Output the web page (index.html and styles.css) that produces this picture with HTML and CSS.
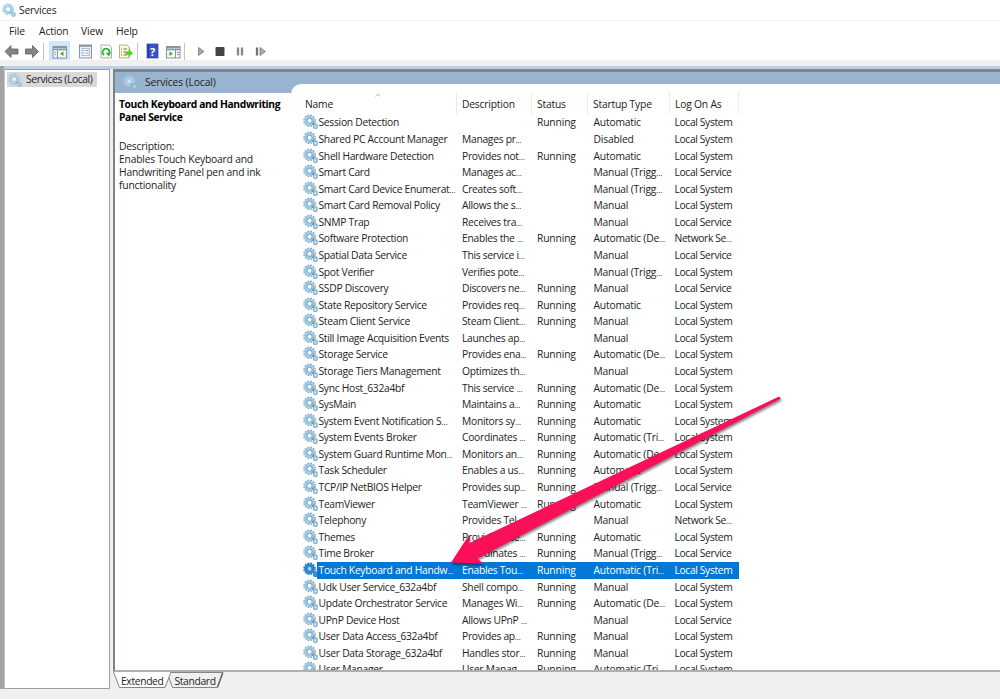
FILE: index.html
```html
<!DOCTYPE html>
<html lang="en">
<head>
  <meta charset="UTF-8" />
  <title>Services</title>
  <link rel="stylesheet" href="styles.css">
</head>
<body>
  <svg width="0" height="0" class="defs">
    <symbol id="gear" viewBox="0 0 16 16">
      <circle cx="7" cy="7.200" r="5.900" fill="none" stroke="#7fa9c4" stroke-width="1.600" stroke-dasharray="1.900 1.190"/>
      <circle cx="7" cy="7.200" r="4.200" fill="#f4fafd" stroke="#9fcae6" stroke-width="2.900"/>
      <circle cx="7" cy="7.200" r="2.700" fill="#fff" stroke="#5f8fb0" stroke-width=".9"/>
      <path d="M9.500 11.500 12.200 8.500" stroke="#5f90b2" stroke-width="1.200"/>
      <rect x="11.200" y="10.500" width="4" height="5" rx="1" fill="#a4cce4" stroke="#6b9cba" stroke-width=".8"/>
      <circle cx="13.200" cy="13" r=".8" fill="#eef8fc"/>
    </symbol>
    <symbol id="gear-light" viewBox="0 0 16 16">
      <circle cx="7" cy="7" r="6" fill="none" stroke="#a3c3d8" stroke-width="1.400" stroke-dasharray="1.900 1.240"/>
      <circle cx="7" cy="7" r="4.300" fill="none" stroke="#a9d3eb" stroke-width="2.600"/>
      <circle cx="7" cy="7" r="2.900" fill="#fff" fill-opacity=".6" stroke="#7dabc9" stroke-width=".7"/>
      <path d="M8.500 12 12 9.500" stroke="#6f9dbc" stroke-width="1"/>
      <rect x="11.200" y="10.800" width="4" height="4.500" rx="1.500" fill="#a9d3eb" stroke="#80abc7" stroke-width=".7"/>
    </symbol>
    <symbol id="gear-selected" viewBox="0 0 16 16">
      <circle cx="7" cy="7.200" r="5.900" fill="none" stroke="#1671bc" stroke-width="1.600" stroke-dasharray="1.900 1.190"/>
      <circle cx="7" cy="7.200" r="4.200" fill="#9fcdf0" stroke="#2b88d0" stroke-width="2.900"/>
      <circle cx="7" cy="7.200" r="2.600" fill="#a5d0f0" stroke="#1765a8" stroke-width=".9"/>
      <rect x="11.200" y="10.500" width="4" height="5" rx="1" fill="#3d98dc" stroke="#1671bc" stroke-width=".8"/>
    </symbol>
  </svg>

  <header class="titlebar">
    <svg class="title-icon"><use href="#gear-light"/></svg>
    <span>Services</span>
  </header>
  <nav class="menubar">
    <span class="menu-file">File</span>
    <span class="menu-action">Action</span>
    <span class="menu-view">View</span>
    <span>Help</span>
  </nav>

  <!-- toolbar buttons share one strip -->
  <svg class="toolbar" viewBox="0 0 1000 20">
    <g fill="#858585" stroke="#606060" stroke-width=".8" stroke-linejoin="round">
      <path d="M5 11.500 11 5.500V9H18V14H11V17.500Z"/>
      <path d="M38.500 11.500 32.500 5.500V9H25.500V14H32.500V17.500Z"/>
    </g>
    <path d="M43.500 3V20M137.500 3V20M184.500 3V20" stroke="#c4c4c4"/>
    <rect x="49" y="1" width="21" height="19" fill="#cce8ff"/>
    <rect x="53" y="6.500" width="13.500" height="11.500" fill="#f5f7f8" stroke="#8a9298"/>
    <path d="M53 7.500H66.500M53 9.500H66.500" stroke="#8198aa" stroke-width="1.500"/>
    <path d="M57.500 10V18" stroke="#8a9298"/>
    <path d="M54.500 12.500H56M54.500 14.500H56" stroke="#7898ad"/>
    <path d="M63.500 11.500V16L60 13.800Z" fill="#29b820"/>
    <rect x="79.500" y="5" width="12" height="13" fill="#edf3f7" stroke="#8995a0"/>
    <path d="M79 6H92" stroke="#82919e" stroke-width="1.500"/>
    <rect x="82" y="8.500" width="7.500" height="7" fill="#fff" stroke="#9cb1c1" stroke-width=".8"/>
    <path d="M83 10.500H84.500M83 13H84.500M85.500 10.500H88.500M85.500 13H88.500" stroke="#6f9dbb"/>
    <path d="M101 5H109L111.500 7.500V18H101Z" fill="#fff" stroke="#979797" stroke-width=".8"/>
    <path d="M104 15A3.500 3.500 0 1 1 109.300 13.500" fill="none" stroke="#24b832" stroke-width="1.700"/>
    <path d="M105.800 12.800H110.800L109 16.800Z" fill="#24b832"/>
    <path d="M119.500 5H127L129.500 7.500V18H119.500Z" fill="#fff9d8" stroke="#9c9985" stroke-width=".8"/>
    <path d="M121 9H122M123.500 9H127M121 12H122M123.500 12H126M121 15H122M123.500 15H127" stroke="#77746b"/>
    <path d="M125.500 11.500H128.500V9L133 13.200 128.500 17V14.800H125.500Z" fill="#51cf29"/>
    <rect x="147" y="4" width="11" height="14" fill="#3653c8" stroke="#2740a1" stroke-width=".7"/>
    <path d="M148.500 4V18" stroke="#1f3796"/>
    <text x="150" y="15.500" class="help-mark">?</text>
    <rect x="166.500" y="6.500" width="13.500" height="11.500" fill="#f5f7f8" stroke="#8a9298"/>
    <path d="M166.500 7.500H180M166.500 9.500H180" stroke="#8198aa" stroke-width="1.500"/>
    <path d="M175.500 10V18" stroke="#8a9298"/>
    <path d="M177 12.500H179M177 14.500H179" stroke="#7898ad"/>
    <path d="M169.500 11.500V16L173 13.800Z" fill="#29b820"/>
    <path d="M198.500 7.500V15.500L204 11.500Z" fill="#aaa" stroke="#777" stroke-width=".8"/>
    <rect x="215.500" y="7" width="9" height="9" rx="1" fill="#444"/>
    <path d="M238 7.500V15.500M242 7.500V15.500" stroke="#858585" stroke-width="2.300"/>
    <path d="M257 7.500V15.500" stroke="#707070" stroke-width="2.300"/>
    <path d="M260 7.500V15.500L265.500 11.500Z" fill="#aaa" stroke="#777" stroke-width=".8"/>
  </svg>

  <main class="workspace">
    <aside class="tree">
      <div class="tree-item">
        <svg class="tree-icon"><use href="#gear-light"/></svg>
        <span>Services (Local)</span>
      </div>
    </aside>
    <section class="right">
      <div class="panel">
        <div class="panel-header">
          <svg class="panel-icon"><use href="#gear-light"/></svg>
          <span>Services (Local)</span>
        </div>
        <div class="panel-body">
          <div class="details">
            <h2>Touch Keyboard and Handwriting<br>Panel Service</h2>
            <p>Description:<br>Enables Touch Keyboard and<br>Handwriting Panel pen and ink<br>functionality</p>
          </div>
          <div class="list">
            <div class="list-head">
              <span>Name<svg class="sort" viewBox="0 0 6 4"><path d="M.5 3.500 3 1 5.500 3.500" fill="none" stroke="#aaa" stroke-width=".8"/></svg></span>
              <span>Description</span>
              <span>Status</span>
              <span>Startup Type</span>
              <span>Log On As</span>
            </div>
            <div id="rows"></div>
          </div>
        </div>
      </div>
      <svg class="tabs" viewBox="0 0 886 17">
        <path d="M54 .5H109.500L104 15.500H59.500Z" fill="#f0f0f0" stroke="#858585"/>
        <path d="M110 .5 104.500 15.500" stroke="#666" stroke-width="1.300"/>
        <path d="M.5 0 6.500 15.500H52L58 0Z" fill="#fff"/>
        <path d="M.5 0 6.500 15.500H52L58 0" fill="none" stroke="#858585"/>
        <text x="8" y="12.500">Extended</text>
        <text x="61.500" y="12.500">Standard</text>
      </svg>
    </section>
  </main>

  <svg class="arrow" viewBox="0 0 1000 699">
    <path d="M451 562.500 469 535 469.500 543 778.500 396.800Q780.500 396.500 780.500 399L477.500 558.500 483 563.800Z"/>
  </svg>

  <script>
    const services = [
      ['Session Detection', '', 'Running', 'Automatic', 'Local System'],
      ['Shared PC Account Manager', 'Manages pr…', '', 'Disabled', 'Local System'],
      ['Shell Hardware Detection', 'Provides not…', 'Running', 'Automatic', 'Local System'],
      ['Smart Card', 'Manages ac…', '', 'Manual (Trigg…', 'Local Service'],
      ['Smart Card Device Enumerat…', 'Creates soft…', '', 'Manual (Trigg…', 'Local System'],
      ['Smart Card Removal Policy', 'Allows the s…', '', 'Manual', 'Local System'],
      ['SNMP Trap', 'Receives tra…', '', 'Manual', 'Local Service'],
      ['Software Protection', 'Enables the …', 'Running', 'Automatic (De…', 'Network Se…'],
      ['Spatial Data Service', 'This service i…', '', 'Manual', 'Local Service'],
      ['Spot Verifier', 'Verifies pote…', '', 'Manual (Trigg…', 'Local System'],
      ['SSDP Discovery', 'Discovers ne…', 'Running', 'Manual', 'Local Service'],
      ['State Repository Service', 'Provides req…', 'Running', 'Automatic', 'Local System'],
      ['Steam Client Service', 'Steam Client…', 'Running', 'Manual', 'Local System'],
      ['Still Image Acquisition Events', 'Launches ap…', '', 'Manual', 'Local System'],
      ['Storage Service', 'Provides ena…', 'Running', 'Automatic (De…', 'Local System'],
      ['Storage Tiers Management', 'Optimizes th…', '', 'Manual', 'Local System'],
      ['Sync Host_632a4bf', 'This service …', 'Running', 'Automatic (De…', 'Local System'],
      ['SysMain', 'Maintains a…', 'Running', 'Automatic', 'Local System'],
      ['System Event Notification S…', 'Monitors sy…', 'Running', 'Automatic', 'Local System'],
      ['System Events Broker', 'Coordinates …', 'Running', 'Automatic (Tri…', 'Local System'],
      ['System Guard Runtime Mon…', 'Monitors an…', 'Running', 'Automatic (De…', 'Local System'],
      ['Task Scheduler', 'Enables a us…', 'Running', 'Automatic', 'Local System'],
      ['TCP/IP NetBIOS Helper', 'Provides sup…', 'Running', 'Manual (Trigg…', 'Local Service'],
      ['TeamViewer', 'TeamViewer …', 'Running', 'Automatic', 'Local System'],
      ['Telephony', 'Provides Tel…', '', 'Manual', 'Network Se…'],
      ['Themes', 'Provides use…', 'Running', 'Automatic', 'Local System'],
      ['Time Broker', 'Coordinates …', 'Running', 'Manual (Trigg…', 'Local Service'],
      ['Touch Keyboard and Handw…', 'Enables Tou…', 'Running', 'Automatic (Tri…', 'Local System'],
      ['Udk User Service_632a4bf', 'Shell compo…', 'Running', 'Manual', 'Local System'],
      ['Update Orchestrator Service', 'Manages Wi…', 'Running', 'Automatic (De…', 'Local System'],
      ['UPnP Device Host', 'Allows UPnP …', '', 'Manual', 'Local Service'],
      ['User Data Access_632a4bf', 'Provides ap…', 'Running', 'Manual', 'Local System'],
      ['User Data Storage_632a4bf', 'Handles stor…', 'Running', 'Manual', 'Local System'],
      ['User Manager', 'User Manag…', 'Running', 'Automatic (Tri…', 'Local System']
    ];
    const selected = 27;

    document.getElementById('rows').innerHTML = services.map((service, i) => `
      <div class="row${i === selected ? ' selected' : ''}">
        <svg class="row-icon"><use href="#gear${i === selected ? '-selected' : ''}"/></svg>
        ${service.map(text => `<span>${text.replace('…', '<i>…</i>')}</span>`).join('')}
      </div>`).join('');
  </script>
</body>
</html>
```
FILE: styles.css
```css
* {
  box-sizing: border-box;
}
body {
  margin: 0;
  height: 699px;
  overflow: hidden;
  display: flex;
  flex-direction: column;
  background: #f0f0f0;
  color: #222;
  font-family: "Open Sans", "Noto Sans", sans-serif;
  font-size: 10.3px;
  letter-spacing: -0.12px;
  white-space: nowrap;
}
.defs {
  position: absolute;
}
.titlebar {
  height: 20px;
  padding-left: 2px;
  display: flex;
  align-items: center;
  gap: 3px;
  background: #fff;
  letter-spacing: -0.2px;
}
.title-icon {
  width: 14px;
  height: 14px;
}
.menubar {
  height: 20px;
  padding: 0 0 0 9px;
  display: flex;
  align-items: center;
  background: #fff;
  border-top: 1px solid #f4f4f4;
}
.menu-file {
  width: 30px;
}
.menu-action {
  width: 42px;
}
.menu-view {
  width: 35px;
}
.toolbar {
  width: 1000px;
  height: 20px;
  flex: none;
  background: #fff;
}
.help-mark {
  font-size: 11px;
  font-weight: bold;
  fill: #fff;
}
.workspace {
  height: 623px;
  margin-top: 6px;
  padding-top: 3px;
  display: flex;
  background: linear-gradient(#b9d1ea 3px, #f0f0f0 3px);
  border-left: 4px solid #a3a3a3;
}
.tree {
  width: 106px;
  height: 620px;
  flex: none;
  padding: 2px 0 0 2px;
  background: #fff;
  border: 1px solid #9a9fa5;
  border-left-color: #c4c4c4;
}
.tree-item {
  width: 90px;
  height: 15px;
  padding-left: 1px;
  display: flex;
  align-items: center;
  gap: 4px;
  background: #d9d9d9;
  letter-spacing: -0.38px;
  line-height: 14px;
}
.tree-item span {
  padding-bottom: 1px;
}
.tree-icon {
  width: 14px;
  height: 14px;
}
.right {
  flex: 1;
  margin-left: 3px;
}
.panel {
  height: 603px;
  overflow: hidden;
  background: #fff;
  border: 2px solid #7b838b;
  border-top-width: 3px;
  border-right: 0;
  border-bottom-color: #b0b0b0;
}
.panel-header {
  height: 21px;
  padding: 0 0 1px 8px;
  display: flex;
  align-items: center;
  gap: 8px;
  background: #99b4d1;
}
.panel-icon {
  width: 14px;
  height: 14px;
}
.panel-body {
  height: 577px;
  display: flex;
}
.details {
  width: 176px;
  flex: none;
  padding: 5px 0 0 4px;
  line-height: 13px;
  letter-spacing: -0.2px;
}
.details h2 {
  margin: 0;
  color: #000;
  font-size: 10.3px;
  letter-spacing: -0.36px;
}
.details p {
  margin: 16px 0 0;
}
.list {
  flex: 1;
  height: 586px;
  margin-top: -9px;
  padding-left: 12px;
  background: #fff;
  border-top-left-radius: 10px;
}
.list-head,
.row {
  display: grid;
  grid-template-columns: 154px 75px 56px 82px 69px;
}
.list-head {
  height: 30.35px;
  padding-top: 8px;
  letter-spacing: -0.2px;
}
.list-head span {
  position: relative;
  padding-left: 5px;
  line-height: 24px;
  height: 22px;
  border-right: 1px solid #ececec;
}
.list-head span:first-child {
  padding-left: 2px;
}
.sort {
  position: absolute;
  left: 72px;
  top: 1px;
  width: 6px;
  height: 4px;
}
.row {
  position: relative;
  height: 16.58px;
  line-height: 17.4px;
  letter-spacing: -0.29px;
}
.row span {
  height: 16.58px;
  padding-left: 5px;
}
.row span:nth-of-type(1) {
  margin-left: 14px;
  padding-left: 1.5px;
}
.row span:nth-of-type(3) {
  letter-spacing: -0.15px;
}
.row span:nth-of-type(4) {
  padding-left: 5.5px;
  letter-spacing: -0.2px;
}
.row span:nth-of-type(5) {
  padding-left: 4.5px;
  letter-spacing: -0.36px;
}
.row i {
  font-size: 7.8px;
  font-style: normal;
}
.row-icon {
  position: absolute;
  left: 0;
  top: 0;
  width: 15px;
  height: 15px;
}
.row.selected {
  color: #fff;
}
.row.selected span {
  background: #0078d7;
}
.tabs {
  display: block;
  width: 886px;
  height: 17px;
  letter-spacing: -0.35px;
}
.tabs text {
  fill: #222;
}
.arrow {
  position: absolute;
  left: 0;
  top: 0;
  width: 1000px;
  height: 699px;
  pointer-events: none;
}
.arrow path {
  fill: #fa1059;
  filter: drop-shadow(1px 2px 1px rgba(0, 0, 0, 0.45));
}
```
